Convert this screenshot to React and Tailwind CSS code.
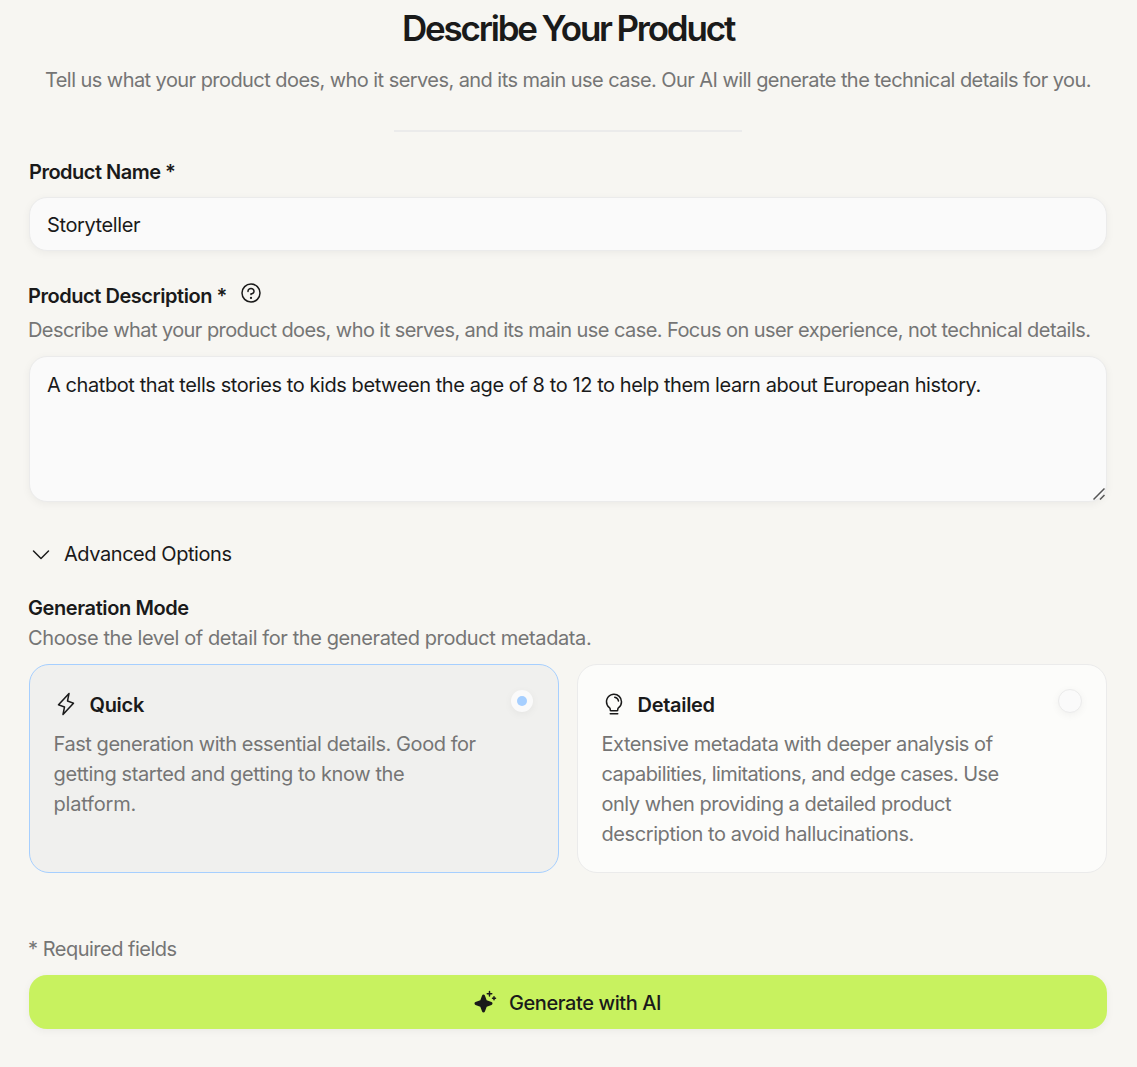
import { useState } from 'react'
import { PiCaretDown, PiLightbulb, PiLightning, PiQuestion, PiSparkleFill } from 'react-icons/pi'

const MODES = [
  {
    id: 'quick',
    title: 'Quick',
    icon: PiLightning,
    lines: [
      { text: 'Fast generation with essential details. Good for', tracking: 'tracking-[-0.44px]' },
      { text: 'getting started and getting to know the', tracking: 'tracking-[-0.38px]' },
      { text: 'platform.', tracking: 'tracking-[-0.2px]' },
    ],
  },
  {
    id: 'detailed',
    title: 'Detailed',
    icon: PiLightbulb,
    lines: [
      { text: 'Extensive metadata with deeper analysis of', tracking: 'tracking-[-0.45px]' },
      { text: 'capabilities, limitations, and edge cases. Use', tracking: 'tracking-[-0.58px]' },
      { text: 'only when providing a detailed product', tracking: 'tracking-[-0.49px]' },
      { text: 'description to avoid hallucinations.', tracking: 'tracking-[-0.42px]' },
    ],
  },
]

function ModeCard({ mode, selected, onSelect }) {
  const Icon = mode.icon
  return (
    <button
      type="button"
      onClick={onSelect}
      className={`flex h-[209px] items-start justify-between rounded-[20px] border pt-6 pr-6 pl-[23.5px] text-left ${
        selected ? 'border-[#a6cfff] bg-[#f0f0ee]' : 'border-[#ebebeb] bg-[#fcfcfa]'
      }`}
    >
      <div>
        <div className="flex h-[30px] items-center gap-3">
          <Icon className="size-6" />
          <span className="pt-0.5 font-semibold tracking-[-0.3px]">{mode.title}</span>
        </div>
        <p className="mt-[10px] text-[#757575]">
          {mode.lines.map(line => (
            <span key={line.text} className={`block whitespace-nowrap ${line.tracking}`}>{line.text}</span>
          ))}
        </p>
      </div>
      <span
        className={`flex items-center justify-center rounded-full bg-[#fafafa] shadow-[0_2px_8px_rgba(0,0,0,0.05)] ${
          selected ? 'm-px size-[22px]' : 'size-6 border border-[#ebebeb]'
        }`}
      >
        {selected && <span className="size-2.5 rounded-full bg-[#a6cfff]" />}
      </span>
    </button>
  )
}

export default function App() {
  const [name, setName] = useState('Storyteller')
  const [description, setDescription] = useState(
    'A chatbot that tells stories to kids between the age of 8 to 12 to help them learn about European history.'
  )
  const [mode, setMode] = useState('quick')

  return (
    <div className="min-h-screen bg-[#f7f6f2] pr-[30px] pl-[29px] font-[Inter,sans-serif] text-[20px] leading-[30px] tracking-[-0.4px] text-[#1a1a1a]">
      <header className="flex flex-col items-center pt-1.5">
        <h1 className="text-[35px] leading-[44px] font-semibold tracking-[-2.2px] whitespace-nowrap [word-spacing:-1px]">
          Describe Your Product
        </h1>
        <p className="mt-[15px] tracking-[-0.56px] whitespace-nowrap text-[#757575]">
          Tell us what your product does, who it serves, and its main use case. Our AI will generate the technical details for you.
        </p>
        <div className="mt-[35px] h-0.5 w-[348px] bg-[#ebebeb]" />
      </header>

      {/* Product name */}
      <label className="mt-[25px] block font-semibold tracking-[-0.5px]">Product Name *</label>
      <input
        className="mt-[10px] block h-[54px] w-full rounded-[18px] border border-[#ebebeb] bg-[#fafafa] px-[17px] pt-0.5 shadow-[0_2px_8px_rgba(0,0,0,0.05)] outline-none"
        value={name}
        onChange={e => setName(e.target.value)}
      />

      {/* Product description */}
      <div className="mt-[30px] flex h-[30px] items-center gap-3">
        <label className="-ml-px font-semibold tracking-[-0.45px]">Product Description *</label>
        <PiQuestion className="mb-1.5 size-6" />
      </div>
      <p className="mt-[4px] -ml-px tracking-[-0.57px] whitespace-nowrap text-[#757575]">
        Describe what your product does, who it serves, and its main use case. Focus on user experience, not technical details.
      </p>
      <div className="relative mt-[11px]">
        <textarea
          className="block h-[146px] w-full resize-none rounded-[18px] border border-[#ebebeb] bg-[#fafafa] px-[17px] py-[13px] tracking-[-0.42px] shadow-[0_2px_8px_rgba(0,0,0,0.05)] outline-none"
          value={description}
          onChange={e => setDescription(e.target.value)}
        />
        <svg className="pointer-events-none absolute right-0.5 bottom-0.5 size-3" viewBox="0 0 12 12" stroke="#555" strokeWidth="1.5">
          <path d="M0.5 11.5 11.5 0.5M7 11.5 11.5 7" />
        </svg>
      </div>

      <button type="button" className="mt-[37px] flex items-center gap-3">
        <PiCaretDown className="size-6" />
        <span className="-ml-px tracking-[-0.44px]">Advanced Options</span>
      </button>

      {/* Generation mode */}
      <h2 className="mt-6 -ml-px font-semibold">Generation Mode</h2>
      <p className="-ml-px whitespace-nowrap text-[#757575]">Choose the level of detail for the generated product metadata.</p>
      <div className="mt-[11px] grid grid-cols-2 gap-[18px]">
        {MODES.map(m => (
          <ModeCard key={m.id} mode={m} selected={mode === m.id} onSelect={() => setMode(m.id)} />
        ))}
      </div>

      <p className="mt-[61px] -ml-px tracking-[-0.5px] text-[#757575]">* Required fields</p>
      <button
        type="button"
        className="mt-[11px] flex h-[54px] w-full items-center justify-center gap-3 rounded-[18px] bg-[#c8f25f] pr-0.5 font-medium shadow-[0_2px_8px_rgba(0,0,0,0.05)]"
      >
        <PiSparkleFill className="size-6" />
        <span className="pt-0.5">Generate with AI</span>
      </button>
    </div>
  )
}
